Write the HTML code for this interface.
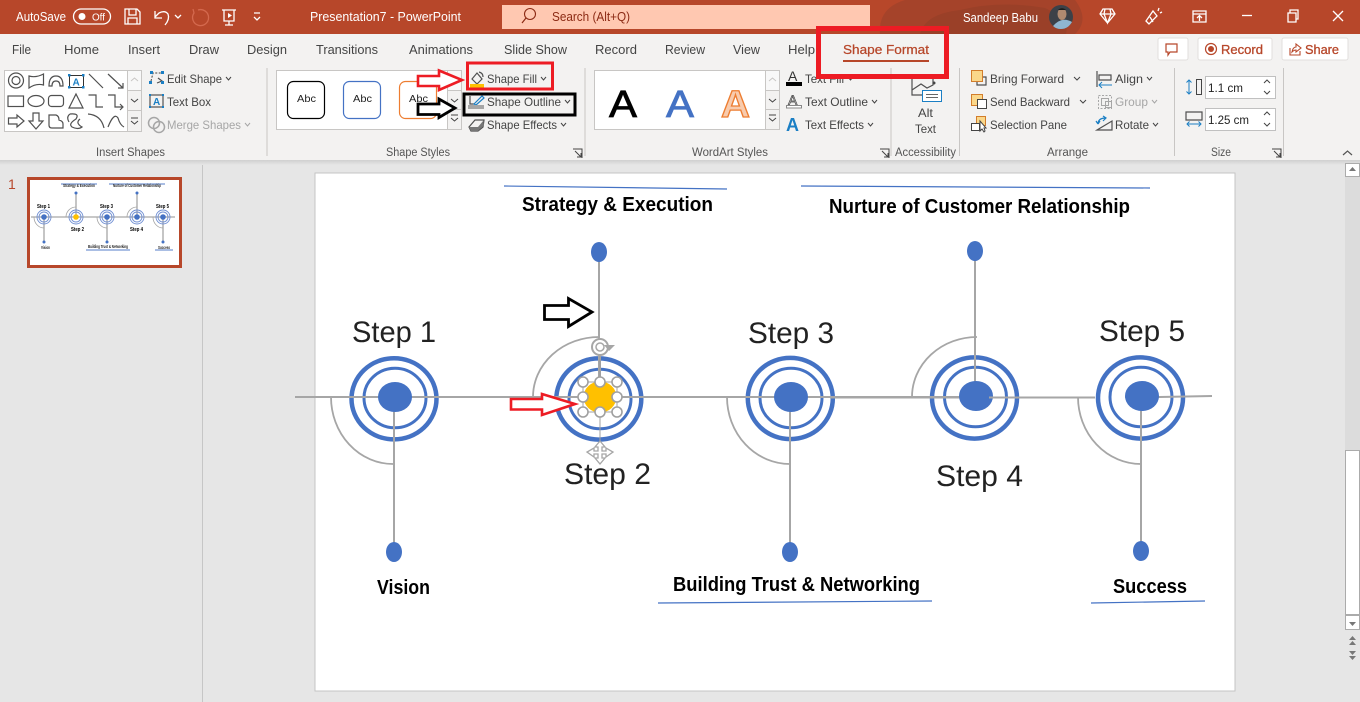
<!DOCTYPE html>
<html><head><meta charset="utf-8"><title>Presentation7 - PowerPoint</title>
<style>
html,body{margin:0;padding:0;width:1360px;height:702px;overflow:hidden;background:#e6e6e6}
svg{display:block;font-family:"Liberation Sans",sans-serif}
.r{font-size:12px;fill:#444}
.t{font-size:13px;fill:#444}
.w{font-size:13px;fill:#fff}
.g{font-size:11.5px;fill:#555}
.b{font-size:20px;font-weight:bold;fill:#000}
.s{font-size:30px;fill:#222}
.ic{fill:none;stroke:#505050;stroke-width:1.200}
.wi{fill:none;stroke:#fff;stroke-width:1.300}
.ch{fill:none;stroke:#444;stroke-width:1}
.bl{fill:none;stroke:#4472c4}
.gl{fill:none;stroke:#a6a6a6}
.h{fill:#fff;stroke:#a0a0a0;stroke-width:1.600}
</style></head><body>
<svg width="1360" height="702" viewBox="0 0 1360 702" xmlns="http://www.w3.org/2000/svg">
<defs>
<linearGradient id="sh" x1="0" y1="0" x2="0" y2="1"><stop offset="0" stop-color="#cfcfcf"/><stop offset="1" stop-color="#e6e6e6"/></linearGradient>
<filter id="bl" x="-5%" y="-5%" width="110%" height="110%"><feGaussianBlur stdDeviation=".35"/></filter>
</defs>

<!-- title bar -->
<rect width="1360" height="34" fill="#b7472a"/>
<path fill="#a5432a" d="M880 34Q878 8 905 0H1075Q1090 20 1075 34Z"/>
<path fill="#9a4028" d="M920 34Q925 14 960 10Q1000 0 1045 8Q1070 20 1066 34Z"/>
<rect x="502" y="5" width="368" height="24" fill="#ffc8b1"/>
<circle cx="530" cy="14" r="5.500" fill="none" stroke="#8c2a14" stroke-width="1.100"/><path d="M526 18L522 23" stroke="#8c2a14" stroke-width="1.200"/>
<text x="552" y="21" font-size="12.500" fill="#8c2a14" textLength="78" lengthAdjust="spacingAndGlyphs">Search (Alt+Q)</text>
<text class="w" x="16" y="21" textLength="50" lengthAdjust="spacingAndGlyphs">AutoSave</text>
<rect x="73.500" y="9" width="37" height="15" rx="7.500" class="wi"/><circle cx="82" cy="16.500" r="3.500" fill="#fff"/>
<text x="92" y="20.500" font-size="10.500" fill="#fff" textLength="13" lengthAdjust="spacingAndGlyphs">Off</text>
<path class="wi" d="M125 9H137L140 12V24H125ZM129 9V15H136V9M128 24V18H137V24"/>
<path class="wi" d="M155 11V18H162M155 17L159 13Q165 10 168 14Q170 19 165 25"/>
<path class="wi" stroke-width="1" d="M175 15L178 18L181 15"/>
<path fill="none" stroke="#d4694e" stroke-width="1.300" d="M198 10A8 8 0 1 1 194 13L193 9"/>
<path class="wi" d="M222 10H236M224 10V21H234V10M229 21V25M225 25H233"/><path fill="#fff" d="M228 13L232 15.500L228 18Z"/>
<path class="wi" d="M254 13H260M254 17L257 20L260 17"/>
<text class="w" x="310" y="21" textLength="151" lengthAdjust="spacingAndGlyphs">Presentation7  -  PowerPoint</text>
<text class="w" x="963" y="22" textLength="75" lengthAdjust="spacingAndGlyphs">Sandeep Babu</text>
<circle cx="1061" cy="17" r="12" fill="#3c4148"/><path fill="#8fb6d0" d="M1053 26Q1062 16 1072 22Q1068 29 1061 29Q1056 29 1053 26Z"/><ellipse cx="1062" cy="14" rx="4.500" ry="6" fill="#b08a70"/><path fill="#1d1d1d" d="M1057 11Q1062 5 1067 11L1066 10H1058Z"/>
<path class="wi" d="M1103 9H1112L1115 14L1107.500 23L1100 14ZM1100 14H1115M1105 9L1104 14L1107.500 23L1111 14L1110 9"/>
<path class="wi" d="M1149 24L1146 21L1153 11L1157 16Z M1150 17L1153 22M1159 8L1158 11M1162 12L1160 13"/>
<path class="wi" d="M1193 11H1206V22H1193ZM1193 14H1206M1199.500 21V16M1197 18L1199.500 15.500L1202 18"/>
<path class="wi" d="M1242 15.500H1252"/>
<path class="wi" d="M1288 13H1296V22H1288ZM1290 13V10H1298V19H1296"/>
<path class="wi" d="M1333 11L1343 21M1343 11L1333 21"/>

<!-- ribbon -->
<rect y="34" width="1360" height="126" fill="#f3f2f1"/>
<rect y="160" width="1360" height="5" fill="url(#sh)"/>
<g class="t">
<text x="12" y="54" textLength="19" lengthAdjust="spacingAndGlyphs">File</text>
<text x="64" y="54" textLength="35" lengthAdjust="spacingAndGlyphs">Home</text>
<text x="128" y="54" textLength="32" lengthAdjust="spacingAndGlyphs">Insert</text>
<text x="189" y="54" textLength="30" lengthAdjust="spacingAndGlyphs">Draw</text>
<text x="247" y="54" textLength="40" lengthAdjust="spacingAndGlyphs">Design</text>
<text x="316" y="54" textLength="62" lengthAdjust="spacingAndGlyphs">Transitions</text>
<text x="409" y="54" textLength="64" lengthAdjust="spacingAndGlyphs">Animations</text>
<text x="504" y="54" textLength="63" lengthAdjust="spacingAndGlyphs">Slide Show</text>
<text x="595" y="54" textLength="42" lengthAdjust="spacingAndGlyphs">Record</text>
<text x="665" y="54" textLength="40" lengthAdjust="spacingAndGlyphs">Review</text>
<text x="733" y="54" textLength="27" lengthAdjust="spacingAndGlyphs">View</text>
<text x="788" y="54" textLength="27" lengthAdjust="spacingAndGlyphs">Help</text>
</g>
<text x="843" y="54" font-size="13" fill="#b7472a" stroke="#b7472a" stroke-width=".25" textLength="86" lengthAdjust="spacingAndGlyphs">Shape Format</text>
<rect x="843" y="60" width="86" height="2" fill="#b7472a"/>

<!-- top-right buttons -->
<g fill="#fff" stroke="#e1dfdd"><rect x="1158" y="38" width="30" height="22" rx="2"/><rect x="1198" y="38" width="74" height="22" rx="2"/><rect x="1282" y="38" width="66" height="22" rx="2"/></g>
<path fill="none" stroke="#b7472a" stroke-width="1.200" d="M1166 44H1177V52H1170L1168 55V52H1166Z"/>
<circle cx="1211" cy="49" r="5.500" fill="none" stroke="#b7472a" stroke-width="1.200"/><circle cx="1211" cy="49" r="3" fill="#b7472a"/>
<text x="1221" y="54" font-size="13" fill="#b7472a" stroke="#b7472a" stroke-width=".3" textLength="42" lengthAdjust="spacingAndGlyphs">Record</text>
<path fill="none" stroke="#b7472a" stroke-width="1.100" d="M1290 48V55H1300V51M1292 52Q1293 47 1296 47V44L1301 48L1296 52V50Q1294 50 1292 52Z"/>
<text x="1305" y="54" font-size="13" fill="#b7472a" stroke="#b7472a" stroke-width=".3" textLength="34" lengthAdjust="spacingAndGlyphs">Share</text>

<!-- separators -->
<path stroke="#c8c6c4" d="M267 68V156M585 68V156M891 68V156M959.500 68V156M1174.500 68V156M1283.500 68V156" fill="none"/>

<!-- Insert Shapes gallery -->
<rect x="4.500" y="70.500" width="123" height="61" fill="#fff" stroke="#c8c6c4"/>
<g fill="#f3f2f1" stroke="#c8c6c4"><rect x="127.500" y="70.500" width="14" height="20" fill="#f8f8f8"/><rect x="127.500" y="90.500" width="14" height="20"/><rect x="127.500" y="110.500" width="14" height="21"/></g>
<path fill="none" stroke="#c8c6c4" d="M131 81L134.500 78L138 81"/><path class="ch" d="M131 99L134.500 102L138 99"/><path class="ch" d="M131 118H138M131 121L134.500 124L138 121"/>
<g class="ic">
<circle cx="16" cy="80.500" r="7.500"/><circle cx="16" cy="80.500" r="4"/>
<path d="M29 76Q36 78 43.500 74V85Q36 83 29 88Z"/>
<path d="M49 86Q49 76 56 76Q63 76 63 86H60Q60 81 56 81Q52 81 52 86Z"/>
<path d="M89 74L103 88M108 74L123 88M123 83V88H118"/>
<rect x="8" y="96" width="15.500" height="10.500"/><ellipse cx="36" cy="101" rx="8" ry="5.500"/><rect x="48.500" y="95.500" width="15" height="11" rx="3"/>
<path d="M76 94L83 108H69ZM88.500 95H96V107H103M108 95H115V107H122M120 104L123 107L120 110"/>
<path d="M8.500 118H17V115L24 121L17 127V124H8.500ZM33 113H39V121H43L36 129L29 121H33ZM49 115H56Q59 116 59 120Q63 121 63 124V128H52Q49 128 49 125Z"/>
<path d="M70 114Q80 113 76 119Q68 124 72 127Q78 130 82 127Q75 123 80 119M69 122Q66 117 70 114"/><path d="M88 114Q101 115 104 128M108 127Q114 112 118 118Q120 125 124 127"/>
</g>
<rect x="69.500" y="75.500" width="14" height="12" fill="none" stroke="#333"/><g fill="#1b7fc4"><rect x="68" y="74" width="2.500" height="2.500"/><rect x="82" y="74" width="2.500" height="2.500"/><rect x="68" y="86" width="2.500" height="2.500"/><rect x="82" y="86" width="2.500" height="2.500"/></g>
<text x="72.500" y="85.500" font-size="10" font-weight="bold" fill="#1b7fc4">A</text>

<path fill="none" stroke="#444" stroke-dasharray="2 1.500" d="M151 81L153 73H163"/><path class="ic" d="M158 78L162 81L157 83"/><g fill="#1b7fc4"><rect x="150" y="71" width="3" height="3"/><rect x="161" y="71" width="3" height="3"/><rect x="149" y="81" width="3" height="3"/><rect x="161" y="81" width="3" height="3"/></g>
<text class="r" x="167" y="83" textLength="55" lengthAdjust="spacingAndGlyphs">Edit Shape</text><path class="ch" d="M226 77L228.500 80L231 77"/>
<rect x="150" y="95" width="13" height="12" fill="none" stroke="#333"/><g fill="#1b7fc4"><rect x="149" y="94" width="2" height="2"/><rect x="162" y="94" width="2" height="2"/><rect x="149" y="106" width="2" height="2"/><rect x="162" y="106" width="2" height="2"/></g>
<text x="153" y="105" font-size="10" font-weight="bold" fill="#1b7fc4">A</text>
<text class="r" x="167" y="106" textLength="44" lengthAdjust="spacingAndGlyphs">Text Box</text>
<g fill="none" stroke="#a6a6a6" stroke-width="1.500"><circle cx="154" cy="123" r="5.500"/><circle cx="159" cy="127" r="5.500"/></g>
<text x="167" y="129" font-size="12" fill="#a6a6a6" textLength="74" lengthAdjust="spacingAndGlyphs">Merge Shapes</text><path fill="none" stroke="#a6a6a6" d="M245 123L247.500 126L250 123"/>
<text class="g" x="96" y="156" textLength="69" lengthAdjust="spacingAndGlyphs">Insert Shapes</text>

<!-- Shape styles gallery -->
<rect x="276.500" y="70.500" width="171" height="59" fill="#fff" stroke="#c8c6c4"/>
<g fill="#f3f2f1" stroke="#c8c6c4"><rect x="447.500" y="70.500" width="14" height="20" fill="#f8f8f8"/><rect x="447.500" y="90.500" width="14" height="19"/><rect x="447.500" y="109.500" width="14" height="20"/></g>
<path class="ch" d="M451 99L454.500 102L458 99M451 115H458M451 118L454.500 121L458 118"/>
<rect x="287.500" y="81.500" width="37" height="37" rx="6" fill="#fff" stroke="#000" stroke-width="1.200"/>
<rect x="343.500" y="81.500" width="37" height="37" rx="6" fill="#fff" stroke="#4472c4" stroke-width="1.200"/>
<rect x="399.500" y="81.500" width="37" height="37" rx="6" fill="#fff" stroke="#ed7d31" stroke-width="1.200"/>
<g font-size="10.500" fill="#222"><text x="297" y="102" textLength="19" lengthAdjust="spacingAndGlyphs">Abc</text><text x="353" y="102" textLength="19" lengthAdjust="spacingAndGlyphs">Abc</text><text x="409" y="102" textLength="19" lengthAdjust="spacingAndGlyphs">Abc</text></g>

<!-- shape fill/outline/effects -->
<path class="ic" d="M472 79L477 73L482 79L477 84ZM479 72Q483 73 483 77"/><rect x="470" y="84" width="14" height="4" fill="#ffc000"/>
<text class="r" x="487" y="83" textLength="50" lengthAdjust="spacingAndGlyphs">Shape Fill</text><path class="ch" d="M541 77L543.500 80L546 77"/>
<path class="ic" d="M470 96V104H474"/><path fill="none" stroke="#1b7fc4" stroke-width="1.200" d="M474 104L482 96L484 98L476 105Z"/><rect x="468" y="105" width="16" height="4" fill="#a6a6a6"/>
<text class="r" x="487" y="106" textLength="74" lengthAdjust="spacingAndGlyphs">Shape Outline</text><path class="ch" d="M565 100L567.500 103L570 100"/>
<path class="ic" d="M469 127L475 120H484L483 127L478 131H471Z"/><path fill="#777" d="M469 127H478L483 121L484 125L478 131H471Z"/>
<text class="r" x="487" y="129" textLength="70" lengthAdjust="spacingAndGlyphs">Shape Effects</text><path class="ch" d="M561 123L563.500 126L566 123"/>
<text class="g" x="386" y="156" textLength="64" lengthAdjust="spacingAndGlyphs">Shape Styles</text>
<path class="ch" d="M573 149H582V158M575 151L581 157M581 153V157H577"/>

<!-- WordArt -->
<rect x="594.500" y="70.500" width="171" height="59" fill="#fff" stroke="#c8c6c4"/>
<g fill="#f3f2f1" stroke="#c8c6c4"><rect x="765.500" y="70.500" width="14" height="20" fill="#f8f8f8"/><rect x="765.500" y="90.500" width="14" height="19"/><rect x="765.500" y="109.500" width="14" height="20"/></g>
<path fill="none" stroke="#c8c6c4" d="M769 81L772.500 78L776 81"/><path class="ch" d="M769 99L772.500 102L776 99M769 115H776M769 118L772.500 121L776 118"/>
<text x="609" y="117" font-size="38" fill="#000" stroke="#000" stroke-width=".8" textLength="28" lengthAdjust="spacingAndGlyphs">A</text>
<text x="666" y="117" font-size="38" fill="#4472c4" stroke="#4472c4" stroke-width=".8" textLength="28" lengthAdjust="spacingAndGlyphs">A</text>
<text x="721" y="117" font-size="38" font-weight="bold" fill="#f8cbad" stroke="#ed7d31" stroke-width="1.300" textLength="29" lengthAdjust="spacingAndGlyphs">A</text>
<text x="788" y="81" font-size="14" fill="#333">A</text><rect x="786" y="82" width="16" height="4" fill="#000"/>
<text x="805" y="83" class="r" textLength="39" lengthAdjust="spacingAndGlyphs">Text Fill</text><path class="ch" d="M848 77L850.500 80L853 77"/>
<text x="788" y="105" font-size="14" fill="none" stroke="#444" stroke-width=".7">A</text><rect x="786.500" y="105.500" width="15" height="2.500" fill="#fff" stroke="#888"/>
<text x="805" y="106" class="r" textLength="63" lengthAdjust="spacingAndGlyphs">Text Outline</text><path class="ch" d="M872 100L874.500 103L877 100"/>
<text x="786" y="131" font-size="18" font-weight="bold" fill="#1b7fc4">A</text>
<text x="805" y="129" class="r" textLength="59" lengthAdjust="spacingAndGlyphs">Text Effects</text><path class="ch" d="M868 123L870.500 126L873 123"/>
<text class="g" x="692" y="156" textLength="76" lengthAdjust="spacingAndGlyphs">WordArt Styles</text>
<path class="ch" d="M880 149H889V158M882 151L888 157M888 153V157H884"/>

<!-- Accessibility -->
<path class="ic" d="M912 78V95H922M912 90L921 84L927 88L933 85V78"/><circle cx="934" cy="83" r="1.500" fill="#444"/>
<rect x="922.500" y="90.500" width="19" height="11" fill="#fff" stroke="#1b7fc4"/><path stroke="#666" d="M926 94.500H938M926 97.500H938"/>
<text class="r" x="918" y="117" textLength="15" lengthAdjust="spacingAndGlyphs">Alt</text><text class="r" x="915" y="133" textLength="21" lengthAdjust="spacingAndGlyphs">Text</text>
<text class="g" x="895" y="156" textLength="61" lengthAdjust="spacingAndGlyphs">Accessibility</text>

<!-- Arrange -->
<rect x="971.500" y="70.500" width="11" height="11" fill="#fad78a" stroke="#d27d2b"/><path class="ic" d="M983 77H986V85H977V82"/>
<text class="r" x="990" y="83" textLength="74" lengthAdjust="spacingAndGlyphs">Bring Forward</text><path class="ch" d="M1074 77L1077 80L1080 77"/>
<rect x="971.500" y="94.500" width="11" height="11" fill="#fad78a" stroke="#d27d2b"/><rect x="977.500" y="99.500" width="9" height="9" fill="#fff" stroke="#444"/>
<text class="r" x="990" y="106" textLength="80" lengthAdjust="spacingAndGlyphs">Send Backward</text><path class="ch" d="M1080 100L1083 103L1086 100"/>
<rect x="976.500" y="116.500" width="9" height="9" fill="#fad78a" stroke="#d27d2b"/><rect x="971.500" y="123.500" width="8" height="7" fill="#fff" stroke="#444"/><path fill="#fff" stroke="#444" d="M980 121V131L982 129L984 132L985 131L984 128H986Z"/>
<text class="r" x="990" y="129" textLength="77" lengthAdjust="spacingAndGlyphs">Selection Pane</text>
<path class="ic" d="M1097 71V87M1099 75H1111V80H1099Z"/><path fill="none" stroke="#1b7fc4" d="M1112 85H1099M1102 82L1099 85L1102 88"/>
<text class="r" x="1115" y="83" textLength="28" lengthAdjust="spacingAndGlyphs">Align</text><path class="ch" d="M1147 77L1149.500 80L1152 77"/>
<g fill="none" stroke="#a6a6a6"><rect x="1098.500" y="95.500" width="13" height="13" stroke-dasharray="2 1.500"/><rect x="1101.500" y="98.500" width="7" height="7"/><rect x="1105.500" y="101.500" width="6" height="6"/></g>
<text x="1115" y="106" font-size="12" fill="#a6a6a6" textLength="33" lengthAdjust="spacingAndGlyphs">Group</text><path fill="none" stroke="#a6a6a6" d="M1152 100L1154.500 103L1157 100"/>
<path fill="none" stroke="#1b7fc4" stroke-width="1.200" d="M1098 124Q1098 118 1106 118M1103 116L1106 118L1103 121M1098 124L1096 121M1098 124L1100 121"/><path class="ic" d="M1097 130L1112 121V130Z"/>
<text class="r" x="1115" y="129" textLength="34" lengthAdjust="spacingAndGlyphs">Rotate</text><path class="ch" d="M1153 123L1155.500 126L1158 123"/>
<text class="g" x="1047" y="156" textLength="41" lengthAdjust="spacingAndGlyphs">Arrange</text>

<!-- Size -->
<path fill="none" stroke="#1b7fc4" d="M1189 80V94M1186.500 82.500L1189 80L1191.500 82.500M1186.500 91.500L1189 94L1191.500 91.500"/>
<rect x="1196.500" y="79.500" width="5" height="15" fill="none" stroke="#444"/>
<path class="ic" d="M1186 112H1202V120H1186Z"/><path fill="none" stroke="#1b7fc4" d="M1187 124H1201M1189.500 121.500L1187 124L1189.500 126.500M1198.500 121.500L1201 124L1198.500 126.500"/>
<rect x="1205.500" y="76.500" width="70" height="22" fill="#fff" stroke="#c0c0c0"/><rect x="1205.500" y="108.500" width="70" height="22" fill="#fff" stroke="#c0c0c0"/>
<text x="1208" y="92" font-size="12" fill="#222" textLength="35" lengthAdjust="spacingAndGlyphs">1.1 cm</text>
<text x="1208" y="124" font-size="12" fill="#222" textLength="41" lengthAdjust="spacingAndGlyphs">1.25 cm</text>
<path class="ch" d="M1264 83L1267 80L1270 83M1264 91L1267 94L1270 91M1264 115L1267 112L1270 115M1264 123L1267 126L1270 123"/>
<text class="g" x="1211" y="156" textLength="20" lengthAdjust="spacingAndGlyphs">Size</text>
<path class="ch" d="M1272 149H1281V158M1274 151L1280 157M1280 153V157H1276"/>
<path fill="none" stroke="#555" stroke-width="1.200" d="M1343 155L1347.500 151L1352 155"/>

<!-- left pane -->
<rect x="202" y="165" width="1" height="537" fill="#c6c6c6"/>
<text x="8" y="189" font-size="14" fill="#b7472a">1</text>
<rect x="28.500" y="178.500" width="152" height="88" fill="#fff" stroke="#b7472a" stroke-width="3"/>
<g filter="url(#bl)">
<path fill="none" stroke="#a6a6a6" stroke-width="1.300" d="M31 217H175M44 217V241M76 193V217M107 217V241M137 193V217M163 217V241"/>
<path fill="none" stroke="#a6a6a6" stroke-width=".8" d="M34 217A10 11 0 0 0 44 228M66 217A10 10 0 0 1 76 207M97 217A10 11 0 0 0 107 228M127 217A10 10 0 0 1 137 207M153 217A10 11 0 0 0 163 228"/>
<g fill="none" stroke="#6f8fd3" stroke-width=".9"><circle cx="44" cy="217" r="7"/><circle cx="44" cy="217" r="5"/><circle cx="76" cy="217" r="7"/><circle cx="76" cy="217" r="5"/><circle cx="107" cy="217" r="7"/><circle cx="107" cy="217" r="5"/><circle cx="137" cy="217" r="7"/><circle cx="137" cy="217" r="5"/><circle cx="163" cy="217" r="7"/><circle cx="163" cy="217" r="5"/></g>
<g fill="#4472c4"><circle cx="44" cy="217" r="2.800"/><circle cx="107" cy="217" r="2.800"/><circle cx="137" cy="217" r="2.800"/><circle cx="163" cy="217" r="2.800"/><circle cx="44" cy="242" r="1.500"/><circle cx="76" cy="193" r="1.500"/><circle cx="107" cy="242" r="1.500"/><circle cx="137" cy="193" r="1.500"/><circle cx="163" cy="242" r="1.500"/></g>
<circle cx="76" cy="217" r="2.800" fill="#ffc000"/>
<path fill="none" stroke="#8ea9db" stroke-width="1.500" d="M61 184H97M109 184H165M86 250H130M155 250H173"/>
<g font-size="4.500" font-weight="bold" fill="#222">
<text x="63" y="187" textLength="32" lengthAdjust="spacingAndGlyphs">Strategy &amp; Execution</text>
<text x="113" y="187" textLength="48" lengthAdjust="spacingAndGlyphs">Nurture of Customer Relationship</text>
<text x="41" y="249" textLength="9" lengthAdjust="spacingAndGlyphs">Vision</text>
<text x="88" y="248" textLength="40" lengthAdjust="spacingAndGlyphs">Building Trust &amp; Networking</text>
<text x="158" y="249" textLength="12" lengthAdjust="spacingAndGlyphs">Success</text>
</g>
<g font-size="5" fill="#000" font-weight="bold">
<text x="37" y="208" textLength="13" lengthAdjust="spacingAndGlyphs">Step 1</text>
<text x="71" y="231" textLength="13" lengthAdjust="spacingAndGlyphs">Step 2</text>
<text x="100" y="208" textLength="13" lengthAdjust="spacingAndGlyphs">Step 3</text>
<text x="130" y="231" textLength="13" lengthAdjust="spacingAndGlyphs">Step 4</text>
<text x="156" y="208" textLength="13" lengthAdjust="spacingAndGlyphs">Step 5</text>
</g>
</g>

<!-- slide -->
<rect x="315" y="173" width="920" height="518" fill="#fff" stroke="#c4c4c4"/>
<g class="bl" stroke-width="4.500"><ellipse cx="394" cy="398.800" rx="42.500" ry="40.600"/><ellipse cx="598.800" cy="399" rx="42.500" ry="40.600"/><ellipse cx="790.300" cy="398.500" rx="42.500" ry="40.600"/><ellipse cx="974.500" cy="398" rx="42.500" ry="40.600"/><ellipse cx="1140.500" cy="398" rx="42.500" ry="40.600"/></g>
<g class="bl" stroke-width="3"><ellipse cx="395" cy="398" rx="31" ry="29.800"/><ellipse cx="600" cy="399" rx="31" ry="29.800"/><ellipse cx="791" cy="398" rx="31" ry="29.800"/><ellipse cx="975.500" cy="397" rx="31" ry="29.800"/><ellipse cx="1141" cy="397" rx="31" ry="29.800"/></g>
<path class="gl" stroke-width="2" d="M295 397H960M1125 397H1160L1212 396"/>
<path class="gl" stroke-width="2" d="M830 397.500H960"/>
<path class="gl" stroke-width="1.800" d="M331 397A62 67 0 0 0 393 464M533 397A66 60 0 0 1 599 337M727 397A63 67 0 0 0 790 464M912 397A65 60 0 0 1 977 337M1078 397A63 67 0 0 0 1141 464"/>
<path class="gl" stroke-width="2" d="M394 397V552M599 252V398M790 397V552M975 251V397M1141 397V551"/>
<g fill="#4472c4">
<ellipse cx="394" cy="552" rx="8" ry="10"/><ellipse cx="599" cy="252" rx="8" ry="10"/><ellipse cx="790" cy="552" rx="8" ry="10"/><ellipse cx="975" cy="251" rx="8" ry="10"/><ellipse cx="1141" cy="551" rx="8" ry="10"/>
<ellipse cx="395" cy="397" rx="17" ry="15"/><ellipse cx="791" cy="397" rx="17" ry="15"/><ellipse cx="976" cy="396" rx="17" ry="15"/><ellipse cx="1142" cy="396" rx="17" ry="15"/>
</g>
<path class="gl" stroke-width="2" d="M989 397.500H1095"/>
<path class="bl" stroke-width="1.200" d="M504 186L727 189M801 186L1150 188M658 603L932 601M1091 603L1205 601"/>
<g class="b">
<text x="522" y="211" textLength="191" lengthAdjust="spacingAndGlyphs">Strategy &amp; Execution</text>
<text x="829" y="213" textLength="301" lengthAdjust="spacingAndGlyphs">Nurture of Customer Relationship</text>
<text x="377" y="594" textLength="53" lengthAdjust="spacingAndGlyphs">Vision</text>
<text x="673" y="591" textLength="247" lengthAdjust="spacingAndGlyphs">Building Trust &amp; Networking</text>
<text x="1113" y="593" textLength="74" lengthAdjust="spacingAndGlyphs">Success</text>
</g>
<g class="s">
<text x="352" y="342" textLength="84" lengthAdjust="spacingAndGlyphs">Step 1</text>
<text x="564" y="484" textLength="87" lengthAdjust="spacingAndGlyphs">Step 2</text>
<text x="748" y="343" textLength="86" lengthAdjust="spacingAndGlyphs">Step 3</text>
<text x="936" y="486" textLength="87" lengthAdjust="spacingAndGlyphs">Step 4</text>
<text x="1099" y="341" textLength="86" lengthAdjust="spacingAndGlyphs">Step 5</text>
</g>

<!-- selected shape -->
<ellipse cx="600" cy="397" rx="16.500" ry="15.500" fill="#ffc000"/>
<rect x="583" y="382" width="34" height="30" fill="none" stroke="#a0a0a0"/>
<path stroke="#a0a0a0" stroke-width="2" d="M600 355V381"/><path stroke="#a0a0a0" d="M600 412V442"/>
<g class="h"><circle cx="583" cy="382" r="5"/><circle cx="600" cy="382" r="5"/><circle cx="617" cy="382" r="5"/><circle cx="583" cy="397" r="5"/><circle cx="617" cy="397" r="5"/><circle cx="583" cy="412" r="5"/><circle cx="600" cy="412" r="5"/><circle cx="617" cy="412" r="5"/></g>
<g fill="#fff" stroke="#a6a6a6" stroke-width="2"><circle cx="600" cy="347" r="8"/></g><circle cx="600" cy="347" r="4" fill="none" stroke="#a6a6a6" stroke-width="1.500"/><path fill="#a6a6a6" d="M604 345H615L609 351Z"/>
<path fill="#fff" stroke="#a6a6a6" stroke-width="1.300" d="M600 441L605 447H602V451H606V448L613 452L606 457V454H602V458H605L600 464L595 458H598V454H594V457L587 452L594 448V451H598V447H595Z"/>

<!-- annotations -->
<g stroke-width="2.600" fill="#fff" stroke="#ed1c24">
<path d="M511 399H542V394L575 404L542 415V409.500H511Z"/>
<path d="M418 76H439V70.500L462 80L439 90V86H418Z"/>
</g>
<g stroke-width="2.800" fill="#fff" stroke="#000">
<path d="M544.500 305.500H568.500V298.500L592 312L568.500 326.500V319.500H544.500Z"/>
<path d="M418 104H439V99L455 108L439 117.500V114.500H418Z"/>
</g>
<g fill="none">
<rect x="467.500" y="63" width="85" height="26" stroke="#ed1c24" stroke-width="3"/>
<rect x="464" y="94" width="111" height="21" stroke="#000" stroke-width="3"/>
<rect x="818.500" y="28.500" width="128" height="48" stroke="#ed1c24" stroke-width="5"/>
</g>

<!-- scrollbar -->
<rect x="1345" y="177" width="15" height="273" fill="#dcdcdc"/>
<g fill="#fff" stroke="#ababab"><rect x="1345.500" y="163.500" width="14" height="13"/><rect x="1345.500" y="450.500" width="14" height="164"/><rect x="1345.500" y="615.500" width="14" height="14"/></g>
<g fill="#777"><path d="M1349 171L1352.500 167L1356 171Z"/><path d="M1349 622H1356L1352.500 626Z"/><path d="M1349 640L1352.500 636L1356 640ZM1349 645L1352.500 641L1356 645Z"/><path d="M1349 651H1356L1352.500 655ZM1349 656H1356L1352.500 660Z"/></g>
</svg>
</body></html>
